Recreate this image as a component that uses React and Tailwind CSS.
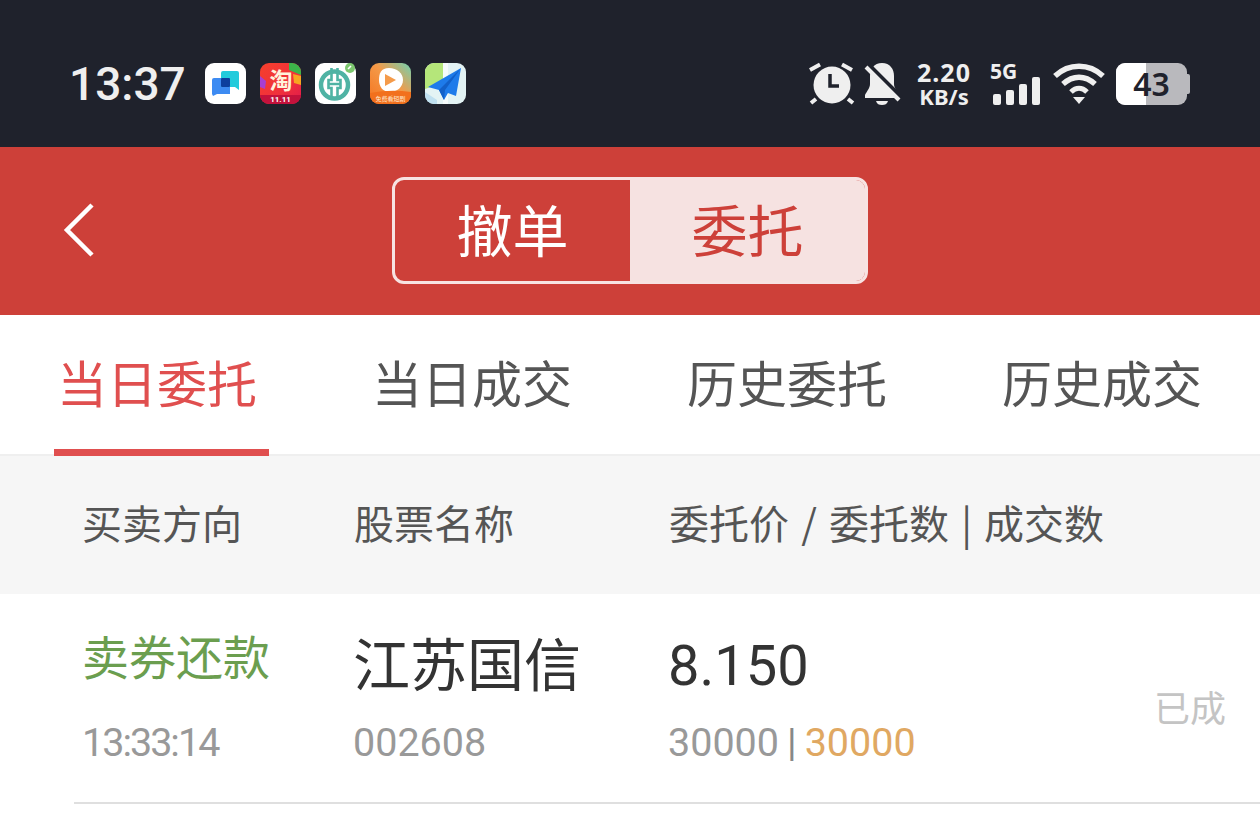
const cjk = '"Noto Sans CJK SC", "Noto Sans", sans-serif';

function AppIcons() {
  return (
    <div className="flex gap-[14.2px] ml-[19px]">
      {/* chat app */}
      <svg width="41" height="41" viewBox="0 0 41 41">
        <rect width="41" height="41" rx="9" fill="#fff" />
        <path d="M9 15h16v16H12l-4 2-1-2V17a2 2 0 0 1 2-2z" fill="#3d8bf2" />
        <path d="M18 8h14a2 2 0 0 1 2 2v17l-4-3H16V10a2 2 0 0 1 2-2z" fill="#22cbdc" />
        <rect x="16" y="15" width="9" height="9" rx="1" fill="#0d3f9e" />
      </svg>
      {/* taobao */}
      <svg width="41" height="41" viewBox="0 0 41 41">
        <defs>
          <linearGradient id="tb" x1="0" y1="0" x2="1" y2="1">
            <stop offset="0" stopColor="#f5402c" />
            <stop offset="0.6" stopColor="#f0303c" />
            <stop offset="1" stopColor="#e01a4c" />
          </linearGradient>
        </defs>
        <rect width="41" height="41" rx="9" fill="url(#tb)" />
        <path d="M29 0h3a9 9 0 0 1 9 9v3L29 7z" fill="#3cb44a" />
        <path d="M33 11l8 2v9l-7-2z" fill="#f7a520" />
        <path d="M0 13l6 5-1 8-5-2z" fill="#a83ed0" />
        <path d="M0 32h41a9 9 0 0 1-9 9H9a9 9 0 0 1-9-9z" fill="#c3123c" />
        <text x="21" y="26" textAnchor="middle" fontSize="23" fontWeight="700" fill="#fff3dc" fontFamily={cjk}>淘</text>
        <text x="20.5" y="39" textAnchor="middle" fontSize="8" fontWeight="700" fill="#fff" fontFamily="Roboto, sans-serif">11.11</text>
      </svg>
      {/* bank */}
      <svg width="41" height="41" viewBox="0 0 41 41">
        <rect width="41" height="41" rx="9" fill="#fff" />
        <circle cx="19.5" cy="22" r="13.5" fill="none" stroke="#4fb3a4" strokeWidth="4.5" />
        <path d="M16.5 5v12h-3v8h3v11M22.5 5v12h3v8h-3v11M13.5 21h12" fill="none" stroke="#4fb3a4" strokeWidth="2.6" />
        <circle cx="35" cy="5" r="5" fill="#7cc76f" />
        <path d="M33 6l3-3" stroke="#fff" strokeWidth="1.6" />
      </svg>
      {/* video */}
      <svg width="41" height="41" viewBox="0 0 41 41">
        <defs>
          <linearGradient id="vd" x1="0" y1="1" x2="1" y2="0">
            <stop offset="0" stopColor="#f5731f" />
            <stop offset="0.55" stopColor="#f49a48" />
            <stop offset="1" stopColor="#6fd2b2" />
          </linearGradient>
        </defs>
        <rect width="41" height="41" rx="9" fill="url(#vd)" />
        <path d="M19 5c8 0 14 5 14 12s-6 12-13 12S9 24 9 17 11 5 19 5z" fill="#fff" />
        <path d="M15 11l11 6-11 6z" fill="#f59b4a" />
        <path d="M0 30q20-4 41-1v3a9 9 0 0 1-9 9H9a9 9 0 0 1-9-9z" fill="#f2701d" />
        <text x="20.5" y="38" textAnchor="middle" fontSize="6" fill="#ffe9cf" fontFamily={cjk}>免费看短剧</text>
      </svg>
      {/* map */}
      <svg width="41" height="41" viewBox="0 0 41 41">
        <rect width="41" height="41" rx="9" fill="#e3f3f4" />
        <path d="M0 9a9 9 0 0 1 9-9h9v20L0 26z" fill="#b5e67a" />
        <path d="M18 0h5v41h-5z" fill="#f6fbfb" />
        <path d="M0 29l12 8v4H9a9 9 0 0 1-9-9z" fill="#bfe0f0" />
        <path d="M36 5L3 24l11 3 5 10 4-7 8 3z" fill="#1e7bea" />
        <path d="M36 5L14 27l5 10 1-10z" fill="#1260c8" />
      </svg>
    </div>
  );
}

function StatusRight() {
  return (
    <div className="flex items-center text-[#efefef]">
      <svg width="48" height="44" viewBox="0 0 48 44">
        <circle cx="24" cy="23" r="18.5" fill="#efefef" />
        <path d="M22 12v12h9" fill="none" stroke="#1f222c" strokeWidth="3.5" />
        <path d="M2 8L12 2.5M34 2.5L44 8M8 37l-5 4M40 37l5 4" stroke="#efefef" strokeWidth="4" fill="none" />
      </svg>
      <svg width="40" height="44" viewBox="0 0 40 44" className="ml-[7px]">
        <path d="M19 1c8 0 12 6 12 13v8c0 4 3 7 5 11v3H2v-3c2-4 5-7 5-11v-8C7 7 11 1 19 1z" fill="#efefef" />
        <path d="M13 39h12c-1 3-3 4-6 4s-5-1-6-4z" fill="#efefef" />
        <path d="M5 2l33 33" stroke="#1f222c" strokeWidth="4" />
        <path d="M3 5l33 33" stroke="#efefef" strokeWidth="4" />
      </svg>
      <div className="w-[54px] ml-[14px] flex flex-col items-center font-bold [font-family:'Noto_Sans',sans-serif]">
        <span className="text-[25px] leading-[25px] tracking-[1px]">2.20</span>
        <span className="text-[22px] leading-[23px]">KB/s</span>
      </div>
      <div className="w-[50px] ml-[19px] flex flex-col items-start">
        <span className="text-[21px] leading-[18px] font-bold [font-family:'Noto_Sans',sans-serif]">5G</span>
        <div className="flex items-end gap-[5px] ml-[3px] mt-[-3px]">
          <span className="w-[8px] h-[11px] rounded-[2px] bg-[#efefef]" />
          <span className="w-[8px] h-[15px] rounded-[2px] bg-[#efefef]" />
          <span className="w-[8px] h-[21px] rounded-[2px] bg-[#efefef]" />
          <span className="w-[8px] h-[28px] rounded-[2px] bg-[#efefef]" />
        </div>
      </div>
      <svg width="52" height="42" viewBox="0 0 52 42" className="ml-[13px]">
        <path d="M2 13c14-13 34-13 48 0" fill="none" stroke="#efefef" strokeWidth="5.5" />
        <path d="M10 21c10-9 22-9 32 0" fill="none" stroke="#efefef" strokeWidth="5.5" />
        <path d="M18 29c5-5 11-5 16 0" fill="none" stroke="#efefef" strokeWidth="5" />
        <path d="M20 34h12l-6 7z" fill="#efefef" />
      </svg>
      <div className="flex items-center ml-[11px]">
        <div className="relative w-[71px] h-[42px] rounded-[9px] overflow-hidden bg-[#b9b9bd] flex items-center justify-center">
          <div className="absolute left-0 top-0 bottom-0 w-[30px] bg-white" />
          <span className="relative text-[32px] leading-none font-semibold text-[#1f222c] [font-family:'Noto_Sans',sans-serif]">43</span>
        </div>
        <div className="w-[3px] h-[20px] rounded-r-[2px] bg-[#b9b9bd]" />
      </div>
    </div>
  );
}

function Tab({ label, active }) {
  return (
    <div className={`relative w-[315px] flex items-center pb-[7px] ${active ? 'text-[#e04f4f]' : 'text-[#555555]'}`}>
      <span className="ml-[57px] text-[50px] leading-none">{label}</span>
      {active && <div className="absolute left-[54px] bottom-[-2px] w-[215px] h-[7px] bg-[#e04f4f]" />}
    </div>
  );
}

export default function App() {
  return (
    <div className="w-[1260px] h-[822px] bg-white overflow-hidden" style={{ fontFamily: cjk }}>
      {/* status bar */}
      <div className="h-[147px] bg-[#1f222c] flex items-center justify-between pl-[69px] pr-[70px] pt-[20px]">
        <div className="flex items-center">
          <span className="text-[46px] font-medium leading-none text-[#efefef] [font-family:Roboto,sans-serif]">13:37</span>
          <AppIcons />
        </div>
        <StatusRight />
      </div>

      {/* header */}
      <div className="relative h-[168px] bg-[#cd4039] flex items-center justify-center">
        <svg width="32" height="56" viewBox="0 0 32 56" className="absolute left-[63px] top-[55px]">
          <path d="M29 3L4 28l25 25" fill="none" stroke="#fff" strokeWidth="4.5" />
        </svg>
        <div className="flex w-[476px] h-[107px] mt-[-2px] border-[3px] border-[#f7e3e2] rounded-[12px] overflow-hidden">
          <div className="w-[235px] flex items-center justify-center pb-[5px] text-white text-[56px] leading-none">撤单</div>
          <div className="flex-1 flex items-center justify-center pb-[5px] bg-[#f6e2e1] text-[#cd4039] text-[56px] leading-none">委托</div>
        </div>
      </div>

      {/* tabs */}
      <div className="flex h-[141px] border-b-2 border-[#efefef]">
        <Tab label="当日委托" active />
        <Tab label="当日成交" />
        <Tab label="历史委托" />
        <Tab label="历史成交" />
      </div>

      {/* column header */}
      <div className="flex items-center h-[138px] pb-[6px] bg-[#f6f6f6] text-[#555555] text-[40px] leading-none">
        <span className="w-[354px] pl-[82px] shrink-0">买卖方向</span>
        <span className="w-[315px] shrink-0">股票名称</span>
        <span className="[word-spacing:3.2px]">委托价 / 委托数 | 成交数</span>
      </div>

      {/* order row */}
      <div className="ml-[74px] h-[210px] border-b-2 border-[#dfdfdf] flex">
        <div className="w-[279px] pl-[8px] shrink-0">
          <div className="mt-[37px] text-[47px] leading-none text-[#6b9e4f]">卖券还款</div>
          <div className="mt-[45px] text-[39.5px] leading-none tracking-[-2px] text-[#999999] [font-family:Roboto,sans-serif]">13:33:14</div>
        </div>
        <div className="w-[315px] shrink-0">
          <div className="mt-[39px] text-[57px] leading-none text-[#333333]">江苏国信</div>
          <div className="mt-[33px] text-[39.5px] leading-none text-[#999999] [font-family:Roboto,sans-serif]">002608</div>
        </div>
        <div className="flex-1">
          <div className="mt-[44px] text-[56px] leading-none text-[#333333] [font-family:Roboto,sans-serif]">8.150</div>
          <div className="mt-[29px] flex text-[39.5px] leading-none text-[#999999] [font-family:Roboto,sans-serif]">
            <span>30000</span>
            <span className="mx-[8px] text-[#888888]">|</span>
            <span className="text-[#e0a862]">30000</span>
          </div>
        </div>
        <div className="self-center mt-[16px] mr-[34px] text-[36px] leading-none text-[#c4c4c4]">已成</div>
      </div>
    </div>
  );
}
